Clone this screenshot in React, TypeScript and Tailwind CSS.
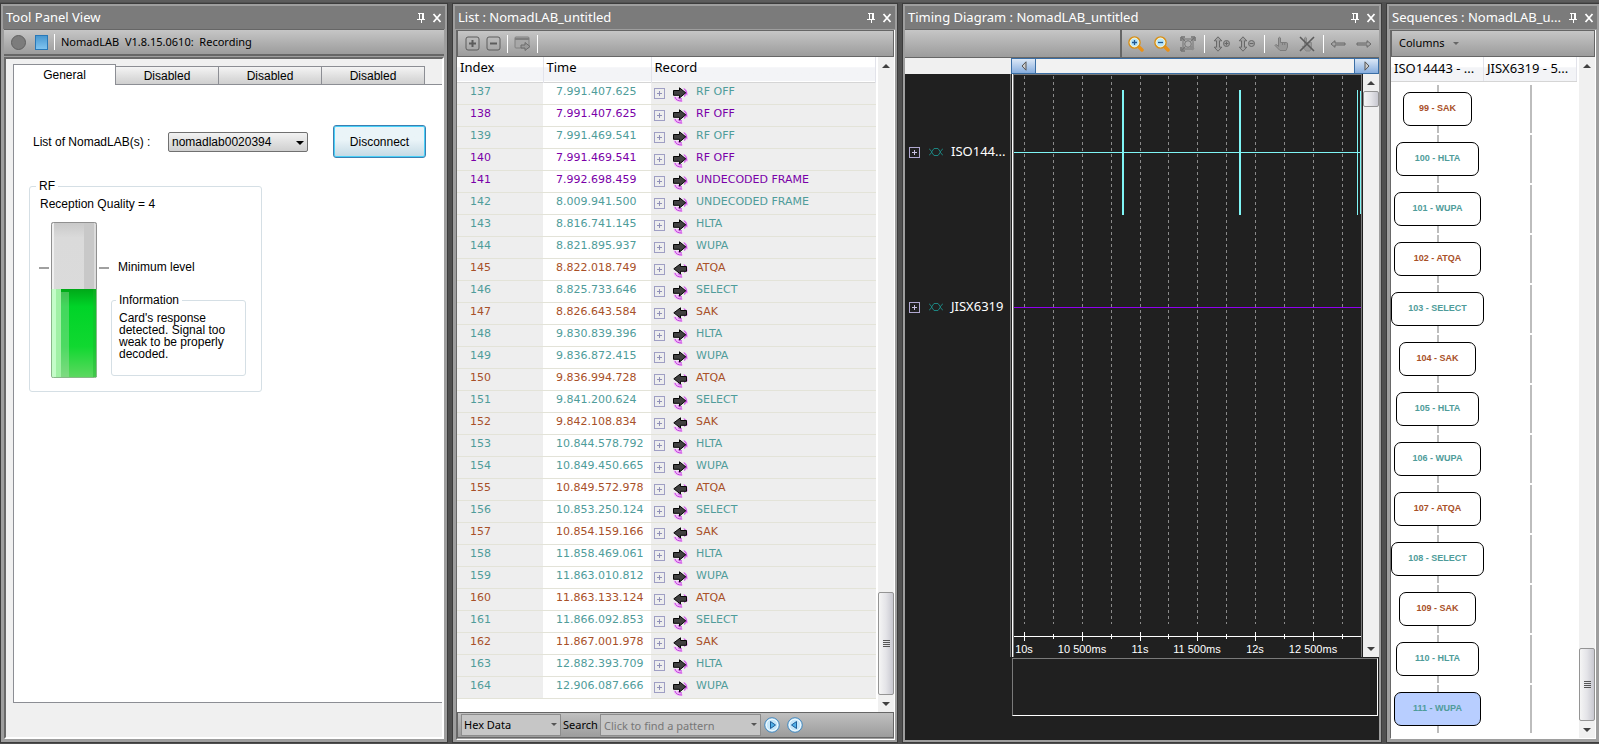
import { Fragment, type ReactNode } from 'react'

type Kind = 'send' | 'recv' | 'rf'

type RecordRow = { index: number; time: string; name: string; kind: Kind }

const kindColor: Record<Kind, string> = {
  send: 'text-[#4f9c9a]',
  recv: 'text-[#a85028]',
  rf: 'text-[#7a00a8]',
}

const rows: RecordRow[] = [
  { index: 137, time: '7.991.407.625', name: 'RF OFF', kind: 'send' },
  { index: 138, time: '7.991.407.625', name: 'RF OFF', kind: 'rf' },
  { index: 139, time: '7.991.469.541', name: 'RF OFF', kind: 'send' },
  { index: 140, time: '7.991.469.541', name: 'RF OFF', kind: 'rf' },
  { index: 141, time: '7.992.698.459', name: 'UNDECODED FRAME', kind: 'rf' },
  { index: 142, time: '8.009.941.500', name: 'UNDECODED FRAME', kind: 'send' },
  { index: 143, time: '8.816.741.145', name: 'HLTA', kind: 'send' },
  { index: 144, time: '8.821.895.937', name: 'WUPA', kind: 'send' },
  { index: 145, time: '8.822.018.749', name: 'ATQA', kind: 'recv' },
  { index: 146, time: '8.825.733.646', name: 'SELECT', kind: 'send' },
  { index: 147, time: '8.826.643.584', name: 'SAK', kind: 'recv' },
  { index: 148, time: '9.830.839.396', name: 'HLTA', kind: 'send' },
  { index: 149, time: '9.836.872.415', name: 'WUPA', kind: 'send' },
  { index: 150, time: '9.836.994.728', name: 'ATQA', kind: 'recv' },
  { index: 151, time: '9.841.200.624', name: 'SELECT', kind: 'send' },
  { index: 152, time: '9.842.108.834', name: 'SAK', kind: 'recv' },
  { index: 153, time: '10.844.578.792', name: 'HLTA', kind: 'send' },
  { index: 154, time: '10.849.450.665', name: 'WUPA', kind: 'send' },
  { index: 155, time: '10.849.572.978', name: 'ATQA', kind: 'recv' },
  { index: 156, time: '10.853.250.124', name: 'SELECT', kind: 'send' },
  { index: 157, time: '10.854.159.166', name: 'SAK', kind: 'recv' },
  { index: 158, time: '11.858.469.061', name: 'HLTA', kind: 'send' },
  { index: 159, time: '11.863.010.812', name: 'WUPA', kind: 'send' },
  { index: 160, time: '11.863.133.124', name: 'ATQA', kind: 'recv' },
  { index: 161, time: '11.866.092.853', name: 'SELECT', kind: 'send' },
  { index: 162, time: '11.867.001.978', name: 'SAK', kind: 'recv' },
  { index: 163, time: '12.882.393.709', name: 'HLTA', kind: 'send' },
  { index: 164, time: '12.906.087.666', name: 'WUPA', kind: 'send' },
]

const sequences = [
  { label: '99 - SAK', kind: 'recv', width: 'w-[69px]' },
  { label: '100 - HLTA', kind: 'send', width: 'w-[83px]' },
  { label: '101 - WUPA', kind: 'send', width: 'w-[87px]' },
  { label: '102 - ATQA', kind: 'recv', width: 'w-[87px]' },
  { label: '103 - SELECT', kind: 'send', width: 'w-[93px]' },
  { label: '104 - SAK', kind: 'recv', width: 'w-[77px]' },
  { label: '105 - HLTA', kind: 'send', width: 'w-[83px]' },
  { label: '106 - WUPA', kind: 'send', width: 'w-[87px]' },
  { label: '107 - ATQA', kind: 'recv', width: 'w-[87px]' },
  { label: '108 - SELECT', kind: 'send', width: 'w-[93px]' },
  { label: '109 - SAK', kind: 'recv', width: 'w-[77px]' },
  { label: '110 - HLTA', kind: 'send', width: 'w-[83px]' },
  { label: '111 - WUPA', kind: 'send', width: 'w-[87px]' },
] as const

const gridX = [10, 39, 68, 97, 126, 154, 183, 212, 241, 270, 299, 328]
const axisLabels = ['10s', '10 500ms', '11s', '11 500ms', '12s', '12 500ms']

/* ---------- shared pieces ---------- */

function Panel({ title, children }: { title: string; children: ReactNode }) {
  return (
    <section className="flex min-h-0 min-w-0 flex-col overflow-hidden border-2 border-[#9e9e9e] bg-[#9e9e9e] outline outline-[#3c3c3c]">
      <header className="flex h-[23px] shrink-0 items-center bg-[#7b7b7b] pl-[3px] pr-[2px] text-white">
        <h2 className="min-w-0 flex-1 whitespace-nowrap text-[13px] leading-[23px]">{title}</h2>
        <button type="button" aria-label="Pin" className="size-3">
          <svg viewBox="0 0 12 12" className="size-3" fill="none" stroke="white" shapeRendering="crispEdges">
            <path d="M3 1.5h6M4.5 2v5M8 2v5M7.5 2v5M2 7.5h8M6.5 8v3" />
          </svg>
        </button>
        <button type="button" aria-label="Close" className="ml-1 size-3">
          <svg viewBox="0 0 12 12" className="size-3" fill="none" stroke="white" strokeWidth="1.8">
            <path d="M2.5 2l7 8M9.5 2l-7 8" />
          </svg>
        </button>
      </header>
      {children}
    </section>
  )
}

function Scrollbar({ thumb, atEnd = false }: { thumb: string; atEnd?: boolean }) {
  return (
    <div className="flex w-4 shrink-0 flex-col items-stretch bg-[#f0f0f0]">
      <button type="button" aria-label="Scroll up" className="flex h-[17px] shrink-0 items-center justify-center">
        <svg viewBox="0 0 8 4" className="h-1 w-2"><path d="M4 0l4 4H0z" fill="#404040" /></svg>
      </button>
      {atEnd && <div className="flex-1" />}
      <div className={`flex shrink-0 flex-col items-center justify-center gap-px rounded-[2px] border border-[#949494] bg-linear-to-r from-[#f5f5f5] via-[#e4e4e8] to-[#c8c8d0] ${thumb}`}>
        {atEnd && [0, 1, 2, 3].map((i) => <span key={i} className="h-px w-[7px] bg-[#555]" />)}
      </div>
      {!atEnd && <div className="flex-1" />}
      <button type="button" aria-label="Scroll down" className="flex h-[17px] shrink-0 items-center justify-center">
        <svg viewBox="0 0 8 4" className="h-1 w-2"><path d="M0 0h8L4 4z" fill="#404040" /></svg>
      </button>
    </div>
  )
}

function Separator() {
  return <span className="h-[18px] w-px bg-white" />
}

function PlusBox({ dark = false }: { dark?: boolean }) {
  return (
    <svg viewBox="0 0 11 11" className="size-[11px] shrink-0" fill="none" shapeRendering="crispEdges">
      <rect x="0.5" y="0.5" width="10" height="10" rx="1" stroke={dark ? '#b0a8d0' : '#9f9fc4'} />
      <path d="M3 5.5h5M5.500 3v5" stroke={dark ? '#c8c0e0' : '#9090b8'} />
    </svg>
  )
}

function FrameArrow({ incoming }: { incoming: boolean }) {
  return (
    <svg viewBox="0 0 15 15" className="size-[15px] shrink-0" fill="none">
      <path d="M1.500 9.500q0 4.500 8 4.500M4 10q1 2.500 5 2.500M11 2q3 1.500 3 6.500M11.500 9.500q1.500-2 .5-5" stroke="#f4b8fa" strokeWidth="2" />
      <path d="M2 10q1 4 7 4M5 10.500q1 1.500 4 1.500M11 1.500q2.500 1.500 2.800 6M11.500 9.500q1.500-2 .5-4.500" stroke="#bc40dc" />
      <path
        d={incoming ? 'M13.500 3.500H7.500V.8L.8 5.800L7.500 11V8.300h6z' : 'M.5 3.500h6V.8l6.200 5L6.500 11V8.300h-6z'}
        fill="#404040"
        stroke="#080808"
      />
    </svg>
  )
}

/* ---------- tool panel ---------- */

function Gauge() {
  return (
    <svg viewBox="0 0 72 156" className="h-[156px] w-[72px] shrink-0" role="img" aria-label="Reception level">
      <defs>
        <linearGradient id="full" x1="0" y1="0" x2="0" y2="1">
          <stop offset="0" stopColor="#00a818" />
          <stop offset="0.2" stopColor="#00d428" />
          <stop offset="0.65" stopColor="#10d830" />
          <stop offset="1" stopColor="#5cd860" />
        </linearGradient>
        <linearGradient id="empty" x1="0" y1="0" x2="0" y2="1">
          <stop offset="0" stopColor="#c8c8c8" />
          <stop offset="0.1" stopColor="#dadada" />
          <stop offset="1" stopColor="#dcdcdc" />
        </linearGradient>
      </defs>
      <path d="M0 46h10M60 46h10" stroke="#a0a0a0" strokeWidth="2" />
      <rect x="12" y="0" width="46" height="156" rx="2" fill="url(#empty)" />
      <rect x="45" y="1" width="12" height="66" fill="#c8c8c8" />
      <rect x="55" y="1" width="2" height="66" fill="#dcdcdc" />
      <rect x="13" y="1" width="2" height="66" fill="#f0f0f0" />
      <rect x="13" y="67" width="45" height="88" fill="url(#full)" />
      <rect x="13" y="67" width="9" height="88" fill="#a0f0a4" />
      <rect x="13" y="67" width="4" height="88" fill="#c4fcc8" />
      <rect x="22" y="70" width="8" height="85" fill="#c0e0c0" opacity="0.35" />
      <rect x="54" y="67" width="4" height="88" fill="#20b030" opacity="0.4" />
      <path d="M12.500 67V2.500q0-2 2-2h41q2 0 2 2V67" fill="none" stroke="#909090" />
      <path d="M12.500 67v87.500q0 1 2 1h41q2 0 2-1V67" fill="none" stroke="#88b888" />
    </svg>
  )
}

function ToolPanel() {
  return (
    <Panel title="Tool Panel View">
      <div className="mx-px flex h-[27px] shrink-0 items-center border-b-2 border-t border-[#666] bg-linear-to-b from-[#c6c6c6] to-[#9c9c9c] pl-[7px] text-[11px]">
        <button type="button" aria-label="Record" className="size-[15px] rounded-full border border-[#606060] bg-[#7c7c7c]" />
        <button type="button" aria-label="Stop" className="ml-[9px] h-[15px] w-[13px] border border-[#2878b8] bg-linear-to-b from-[#4898d0] to-[#80c4f0]" />
        <span className="mx-[6px] h-4 w-px bg-white" />
        <span className="whitespace-pre">NomadLAB  V1.8.15.0610:  Recording</span>
      </div>
      <div className="mx-px mt-px flex min-h-0 flex-1 flex-col border-2 border-b-white border-l-[#696969] border-r-white border-t-[#696969] bg-[#f0f0f0] pl-[7px] pt-[5px] font-['Liberation_Sans',sans-serif] text-[12px]">
        <div role="tablist" className="flex h-[21px] shrink-0 items-end">
          <button type="button" role="tab" aria-selected="true" className="h-[21px] w-[103px] border-x border-t border-[#8c8e94] bg-white">
            General
          </button>
          {[0, 1, 2].map((i) => (
            <button
              key={i}
              type="button"
              role="tab"
              disabled
              className="h-[19px] w-[103px] border border-l-0 border-[#8c8e94] bg-linear-to-b from-[#f4f4f4] to-[#cfcfcf]"
            >
              Disabled
            </button>
          ))}
          <span className="flex-1 self-end border-b border-[#8c8e94]" />
        </div>
        <div className="mb-[34px] flex-1 border-b border-l border-[#8c8e94] bg-white pl-[15px] pt-10">
          <div className="flex items-center pl-1">
            <label htmlFor="device" className="w-[135px]">List of NomadLAB(s) :</label>
            <div className="relative">
              <select
                id="device"
                className="h-5 w-[140px] appearance-none rounded-[2px] border border-[#707070] bg-linear-to-b from-[#f2f2f2] to-[#cfcfcf] pl-[3px]"
              >
                <option>nomadlab0020394</option>
              </select>
              <svg viewBox="0 0 8 4" className="pointer-events-none absolute right-1 top-[9px] h-1 w-2"><path d="M0 0h8L4 4z" fill="#000" /></svg>
            </div>
            <button
              type="button"
              className="ml-[25px] h-[33px] w-[93px] rounded-[3px] border border-[#3c7fb1] bg-linear-to-b from-[#eaf4f8] from-45% to-[#c3d9e4] shadow-[inset_0_0_0_1px_#48d0f8]"
            >
              Disconnect
            </button>
          </div>
          <fieldset className="mt-[22px] h-[212px] w-[233px] rounded-[3px] border border-[#d5dfe5] pl-[9px]">
            <legend className="-ml-[3px] px-[3px] leading-3">RF</legend>
            <p className="mt-[5px] pl-[1px] leading-[14px]">Reception Quality = 4</p>
            <div className="mt-[11px] flex">
              <Gauge />
              <div className="pt-[38px]">
                <p className="pl-[7px] leading-[14px]">Minimum level</p>
                <fieldset className="mt-5 h-[82px] w-[135px] rounded-[3px] border border-[#d5dfe5] pl-[4px]">
                  <legend className="px-[3px] leading-3">Information</legend>
                  <p className="mt-[6px] w-[110px] pl-[3px] leading-3">
                    Card's response detected. Signal too weak to be properly decoded.
                  </p>
                </fieldset>
              </div>
            </div>
          </fieldset>
        </div>
      </div>
      <div className="h-px" />
    </Panel>
  )
}

/* ---------- record list ---------- */

function ListPanel() {
  return (
    <Panel title="List : NomadLAB_untitled">
      <div className="ml-px mt-px flex min-h-0 flex-1 flex-col border-b border-l border-r border-b-white border-l-[#696969] border-r-white bg-white">
        <div className="flex h-[27px] shrink-0 items-center gap-[6px] border border-[#666] bg-linear-to-b from-[#c6c6c6] to-[#9c9c9c] pl-[7px]">
          <button type="button" aria-label="Expand all">
            <svg viewBox="0 0 15 15" className="size-[15px]" fill="none" stroke="#5c5c5c">
              <rect x="1" y="1" width="13" height="13" rx="2" />
              <path d="M4 7.500h7M7.500 4v7" strokeWidth="2" />
            </svg>
          </button>
          <button type="button" aria-label="Collapse all">
            <svg viewBox="0 0 15 15" className="size-[15px]" fill="none" stroke="#5c5c5c">
              <rect x="1" y="1" width="13" height="13" rx="2" />
              <path d="M4 7.500h7" strokeWidth="2" />
            </svg>
          </button>
          <Separator />
          <button type="button" aria-label="Export">
            <svg viewBox="0 0 17 15" className="h-[15px] w-[17px]" fill="none" stroke="#808080">
              <rect x="1" y="1" width="14" height="11" rx="1" fill="#a8a8a8" />
              <path d="M1 3h14" strokeWidth="2" />
              <path d="M7 9h4V6.500l5 4-5 4V12H7z" fill="#999" stroke="#6c6c6c" />
            </svg>
          </button>
          <Separator />
        </div>
        <div className="flex min-h-0 flex-1">
          <div className="min-w-0 flex-1">
            <table className="w-full table-fixed border-collapse font-['DejaVu_Sans',sans-serif] text-[11px]">
              <colgroup>
                <col className="w-[86px]" />
                <col className="w-[108px]" />
                <col />
              </colgroup>
              <thead>
                <tr className="h-[25px] border-b border-[#d5d5d5] bg-linear-to-b from-white from-40% to-[#f3f4f7] to-45% text-left font-['Noto_Sans',sans-serif] text-[13px]">
                  <th className="border-r border-[#e2e3ea] p-0 pl-[3px] font-normal leading-5 align-top">Index</th>
                  <th className="border-r border-[#e2e3ea] p-0 pl-[3px] font-normal leading-5 align-top">Time</th>
                  <th className="border-r border-[#e2e3ea] p-0 pl-[3px] font-normal leading-5 align-top">Record</th>
                </tr>
              </thead>
              <tbody>
                {rows.map((row) => (
                  <tr key={row.index} className={`h-[22px] border-b border-[#e3e3d8] bg-[#eee] ${kindColor[row.kind]}`}>
                    <td className="p-0 pl-[13px] align-top leading-[18px]">{row.index}</td>
                    <td className="bg-white p-0 pl-[13px] align-top leading-[18px]">{row.time}</td>
                    <td className="p-0 pl-[3px] align-top">
                      <div className="flex h-[21px] items-start">
                        <span className="pt-[5px]"><PlusBox /></span>
                        <span className="pl-2 pt-[4px]"><FrameArrow incoming={row.kind === 'recv'} /></span>
                        <span className="pl-2 leading-[18px]">{row.name}</span>
                      </div>
                    </td>
                  </tr>
                ))}
              </tbody>
            </table>
          </div>
          <div className="ml-[2px] flex"><Scrollbar thumb="h-[103px]" atEnd /></div>
        </div>
        <div className="flex h-[26px] shrink-0 items-center border border-[#666] bg-linear-to-b from-[#c0c0c0] to-[#9c9c9c] pl-[3px] text-[11px]">
          <div className="relative">
            <select aria-label="Display" className="h-[22px] w-[100px] appearance-none border border-[#8c8c8c] bg-[#c6c6c6] pl-[2px]">
              <option>Hex Data</option>
            </select>
            <svg viewBox="0 0 6 3" className="pointer-events-none absolute right-1 top-[9px] h-[3px] w-[6px]"><path d="M0 0h6L3 3z" fill="#555" /></svg>
          </div>
          <label htmlFor="pattern" className="ml-[2px] w-[37px]">Search</label>
          <div className="relative">
            <input
              id="pattern"
              placeholder="Click to find a pattern"
              className="h-[22px] w-[161px] border border-[#8c8c8c] bg-[#c6c6c6] pl-[3px] placeholder:text-[#777]"
            />
            <svg viewBox="0 0 6 3" className="pointer-events-none absolute right-1 top-[9px] h-[3px] w-[6px]"><path d="M0 0h6L3 3z" fill="#555" /></svg>
          </div>
          {['M6.500 4.500v7l5-3.500z', 'M9.500 4.500v7l-5-3.500z'].map((d, i) => (
            <button key={d} type="button" aria-label={i ? 'Find previous' : 'Find next'} className="ml-[3px] mr-1">
              <svg viewBox="0 0 16 16" className="size-4">
                <circle cx="8" cy="8" r="7.300" fill="#c4e6fa" stroke="#4888bc" />
                <circle cx="8" cy="8" r="5.800" fill="none" stroke="#f0faff" />
                <path d={d} fill="#50b0e8" stroke="#1c5c98" />
              </svg>
            </button>
          ))}
        </div>
        <div className="h-px shrink-0 bg-[#9e9e9e]" />
      </div>
    </Panel>
  )
}

/* ---------- timing diagram ---------- */

function ZoomIcon({ plus }: { plus: boolean }) {
  return (
    <svg viewBox="0 0 16 16" className="size-4" fill="none">
      <path d="M11 11l3 3" stroke="#e89018" strokeWidth="3.500" strokeLinecap="round" />
      <circle cx="6.500" cy="6.500" r="5.500" fill="#b4e4fc" stroke="#d89018" strokeWidth="1.600" />
      <circle cx="6.500" cy="6.500" r="4.400" stroke="#fff4c8" />
      <path d={plus ? 'M4 6.500h5M6.500 4v5' : 'M4 6.500h5'} stroke="#205890" strokeWidth="1.300" />
    </svg>
  )
}

function ScaleIcon({ plus }: { plus: boolean }) {
  return (
    <svg viewBox="0 0 18 16" className="h-4 w-[18px]" fill="#a2a2a2" stroke="#686868">
      <path d="M5 .8l3.800 4H6.500v6.400h2.300L5 15.200l-3.800-4h2.300V4.800H1.200z" />
      <circle cx="13.500" cy="7.500" r="3" />
      <path d={plus ? 'M11.500 7.500h4M13.500 5.500v4' : 'M11.500 7.500h4'} />
    </svg>
  )
}

function Toolbar() {
  return (
    <div className="flex h-[29px] shrink-0 border-y border-[#666]">
      <div className="flex-1 bg-linear-to-b from-[#c6c6c6] to-[#9c9c9c]" />
      <div className="flex w-[259px] items-center border-l-2 border-[#666] bg-linear-to-b from-[#c6c6c6] to-[#9c9c9c] pl-[6px]">
        <button type="button" aria-label="Zoom in"><ZoomIcon plus /></button>
        <button type="button" aria-label="Zoom out" className="ml-[10px]"><ZoomIcon plus={false} /></button>
        <button type="button" aria-label="Fit" className="ml-[10px]">
          <svg viewBox="0 0 16 16" className="size-4" fill="none" stroke="#737373">
            <path d="M1 1h4M1 1v4M15 1h-4M15 1v4M1 15h4M1 15v-4" strokeWidth="1.600" />
            <path d="M2 2l3 3M14 2l-3 3M2 14l3-3" strokeWidth="1.300" />
            <rect x="3" y="3" width="10" height="10" />
            <circle cx="8" cy="8" r="3.300" fill="#b0b0b0" />
            <path d="M10.500 10.500l3 3" strokeWidth="3" stroke="#8c8c8c" />
          </svg>
        </button>
        <span className="mx-2"><span className="block h-[18px] w-px bg-white" /></span>
        <button type="button" aria-label="Increase height"><ScaleIcon plus /></button>
        <button type="button" aria-label="Decrease height" className="ml-[7px]"><ScaleIcon plus={false} /></button>
        <span className="mx-2"><span className="block h-[18px] w-px bg-white" /></span>
        <button type="button" aria-label="Pan">
          <svg viewBox="0 0 16 16" className="size-4" fill="#989898" stroke="#7c7c7c">
            <path d="M5.500 9V2q1.200-1.500 2 0v4.500h6q1 0 1 1.500v3l-1.500 3.500H7L2 9.500q.5-1.500 2-.5l1.500 1.500zM9.500 6.500V9M11.700 6.500V9" />
          </svg>
        </button>
        <button type="button" aria-label="Remove cursor" className="ml-[10px]">
          <svg viewBox="0 0 16 16" className="size-4" fill="none">
            <path d="M5.500 9V2q1.200-1.500 2 0v4.500h5v5L11 15H7L3 10" fill="#989898" stroke="#888" />
            <path d="M1 1l14 14M15 1L1 15" stroke="#5c5c5c" strokeWidth="1.600" />
          </svg>
        </button>
        <span className="ml-2 mr-[6px]"><span className="block h-[18px] w-px bg-white" /></span>
        <button type="button" aria-label="Previous">
          <svg viewBox="0 0 16 8" className="h-2 w-4" fill="#a4a4a4" stroke="#686868"><path d="M1 4l4-3.300V3h10v2H5v2.300z" /></svg>
        </button>
        <button type="button" aria-label="Next" className="ml-[10px]">
          <svg viewBox="0 0 16 8" className="h-2 w-4" fill="#a4a4a4" stroke="#686868"><path d="M15 4l-4-3.300V3H1v2h10v2.300z" /></svg>
        </button>
      </div>
    </div>
  )
}

function Plot() {
  return (
    <svg className="h-full min-w-0 flex-1 font-['Liberation_Sans',sans-serif] text-[11px]" shapeRendering="crispEdges" role="img" aria-label="Frames over time">
      <g stroke="#8a8a8a" strokeDasharray="3 3">
        {gridX.map((x) => <line key={x} x1={x + 0.5} x2={x + 0.5} y1="1" y2="549" />)}
      </g>
      <rect x="0" y="77" width="100%" height="1" fill="#7ff5f5" />
      <rect x="0" y="232" width="100%" height="1" fill="#9000f0" />
      <g fill="#7ff5f5">
        <rect x="108" y="15" width="2" height="125" />
        <rect x="225" y="15" width="2" height="125" />
        <rect x="343" y="15" width="1" height="125" />
        <rect x="346" y="16" width="1" height="123" />
      </g>
      <line x1="0" x2="100%" y1="561.5" y2="561.5" stroke="#fff" />
      {gridX.map((x, i) => (
        <Fragment key={x}>
          <line x1={x + 0.5} x2={x + 0.5} y1={i % 2 ? 559 : 557} y2={i % 2 ? 564 : 566} stroke="#fff" />
          {i % 2 === 0 && (
            <text x={x} y="578" textAnchor="middle" fill="#fff">{axisLabels[i / 2]}</text>
          )}
        </Fragment>
      ))}
    </svg>
  )
}

function Channel({ name }: { name: string }) {
  return (
    <li className="flex h-5 items-center pl-1">
      <button type="button" aria-label={`Expand ${name}`}><PlusBox dark /></button>
      <svg viewBox="0 0 14 8" className="ml-[9px] h-2 w-[14px] shrink-0" fill="none" stroke="#1c8480">
        <path d="M0 .5L3 4 0 7.500M14 .5L11 4l3 3.500M5 .5h4L11.500 4 9 7.500H5L2.500 4z" />
      </svg>
      <span className="ml-2 whitespace-nowrap text-[13px] text-white">{name}</span>
    </li>
  )
}

function TimingPanel() {
  return (
    <Panel title="Timing Diagram : NomadLAB_untitled">
      <Toolbar />
      <div className="flex h-4 shrink-0 bg-[#f0f0f0] pl-[106px]">
        <div className="flex flex-1 justify-between border border-[#3a6ea5] bg-[#f2f2f2]">
          <button type="button" aria-label="Scroll left" className="flex w-[24px] items-center justify-center border-r border-[#3a6ea5] bg-linear-to-b from-[#dce8f6] to-[#88aede]">
            <svg viewBox="0 0 6 10" className="h-[10px] w-[6px]"><path d="M5 .8v8.400L1 5z" fill="#ccc" stroke="#555" /></svg>
          </button>
          <button type="button" aria-label="Scroll right" className="flex w-[24px] items-center justify-center border-l border-[#3a6ea5] bg-linear-to-b from-[#dce8f6] to-[#88aede]">
            <svg viewBox="0 0 6 10" className="h-[10px] w-[6px]"><path d="M1 .8v8.400L5 5z" fill="#ccc" stroke="#555" /></svg>
          </button>
        </div>
      </div>
      <div className="flex min-h-0 flex-1 bg-[#202020]">
        <ul className="flex w-[105px] shrink-0 flex-col gap-[135px] pt-[68px]">
          <Channel name="ISO144..." />
          <Channel name="JISX6319" />
        </ul>
        <div className="flex min-w-0 flex-1 flex-col">
          <div className="flex min-h-0 flex-1">
            <div className="flex min-w-0 flex-1 border-l border-[#7a7a7a]">
              <div className="ml-px flex min-w-0 flex-1 border-l border-white">
                <div className="flex min-w-0 flex-1 border-x border-t border-[#7a7a7a]"><Plot /></div>
              </div>
            </div>
            <div className="ml-px flex"><Scrollbar thumb="h-4" /></div>
          </div>
          <div className="mb-6 ml-[2px] mr-px mt-px h-[58px] shrink-0 border border-[#7a7a7a] border-b-white border-r-white" />
        </div>
      </div>
    </Panel>
  )
}

/* ---------- sequences ---------- */

function SequencesPanel() {
  return (
    <Panel title="Sequences : NomadLAB_u...">
      <div className="mx-px mt-px flex min-h-0 flex-1 flex-col border-b border-l border-r border-b-white border-l-[#696969] border-r-white bg-white">
        <div className="flex h-[27px] shrink-0 items-center border border-[#666] bg-linear-to-b from-[#c6c6c6] to-[#9c9c9c] pl-[7px] text-[11px]">
          <button type="button" className="flex items-center gap-2">
            Columns
            <svg viewBox="0 0 6 3" className="h-[3px] w-[6px]"><path d="M0 0h6L3 3z" fill="#666" /></svg>
          </button>
        </div>
        <div className="flex min-h-0 flex-1">
          <div className="min-w-0 flex-1 pr-[2px]">
            <div className="grid h-[25px] grid-cols-2 border-b border-[#d5d5d5] bg-linear-to-b from-white from-40% to-[#f3f4f7] to-45% text-[13px] leading-[22px]">
              <span className="whitespace-nowrap border-r border-[#e2e3ea] pl-[3px]">ISO14443 - ...</span>
              <span className="whitespace-nowrap border-r border-[#e2e3ea] pl-[3px]">JISX6319 - 5...</span>
            </div>
            <ol className="flex flex-col gap-[2px] pt-[3px]">
              {sequences.map((item, i) => (
                <li key={item.label} className="grid h-12 grid-cols-2 justify-items-center">
                  <div className="flex flex-col items-center">
                    <span className="h-[7px] w-[2px] bg-[#bdbdbd]" />
                    <div
                      className={`flex h-[34px] items-center justify-center rounded-[7px] border border-black font-['Liberation_Sans',sans-serif] text-[9px] font-bold ${item.width} ${kindColor[item.kind]} ${i === 12 ? 'bg-[#b8ceff]' : 'bg-white'}`}
                    >
                      {item.label}
                    </div>
                    <span className="h-[7px] w-[2px] bg-[#bdbdbd]" />
                  </div>
                  <span className="h-12 w-[2px] bg-[#bdbdbd]" />
                </li>
              ))}
            </ol>
          </div>
          <Scrollbar thumb="h-[73px]" atEnd />
        </div>
      </div>
      <div className="h-px shrink-0" />
    </Panel>
  )
}

export default function App() {
  return (
    <main className="grid h-screen grid-cols-[446px_444px_minmax(0,1fr)_212px] grid-rows-[minmax(0,1fr)] gap-[6px] overflow-hidden border-t-2 border-[#5c5c5c] bg-[#505050] pb-[2px] pl-px pt-[2px] font-['Noto_Sans',sans-serif] text-black">
      <ToolPanel />
      <ListPanel />
      <TimingPanel />
      <SequencesPanel />
    </main>
  )
}
